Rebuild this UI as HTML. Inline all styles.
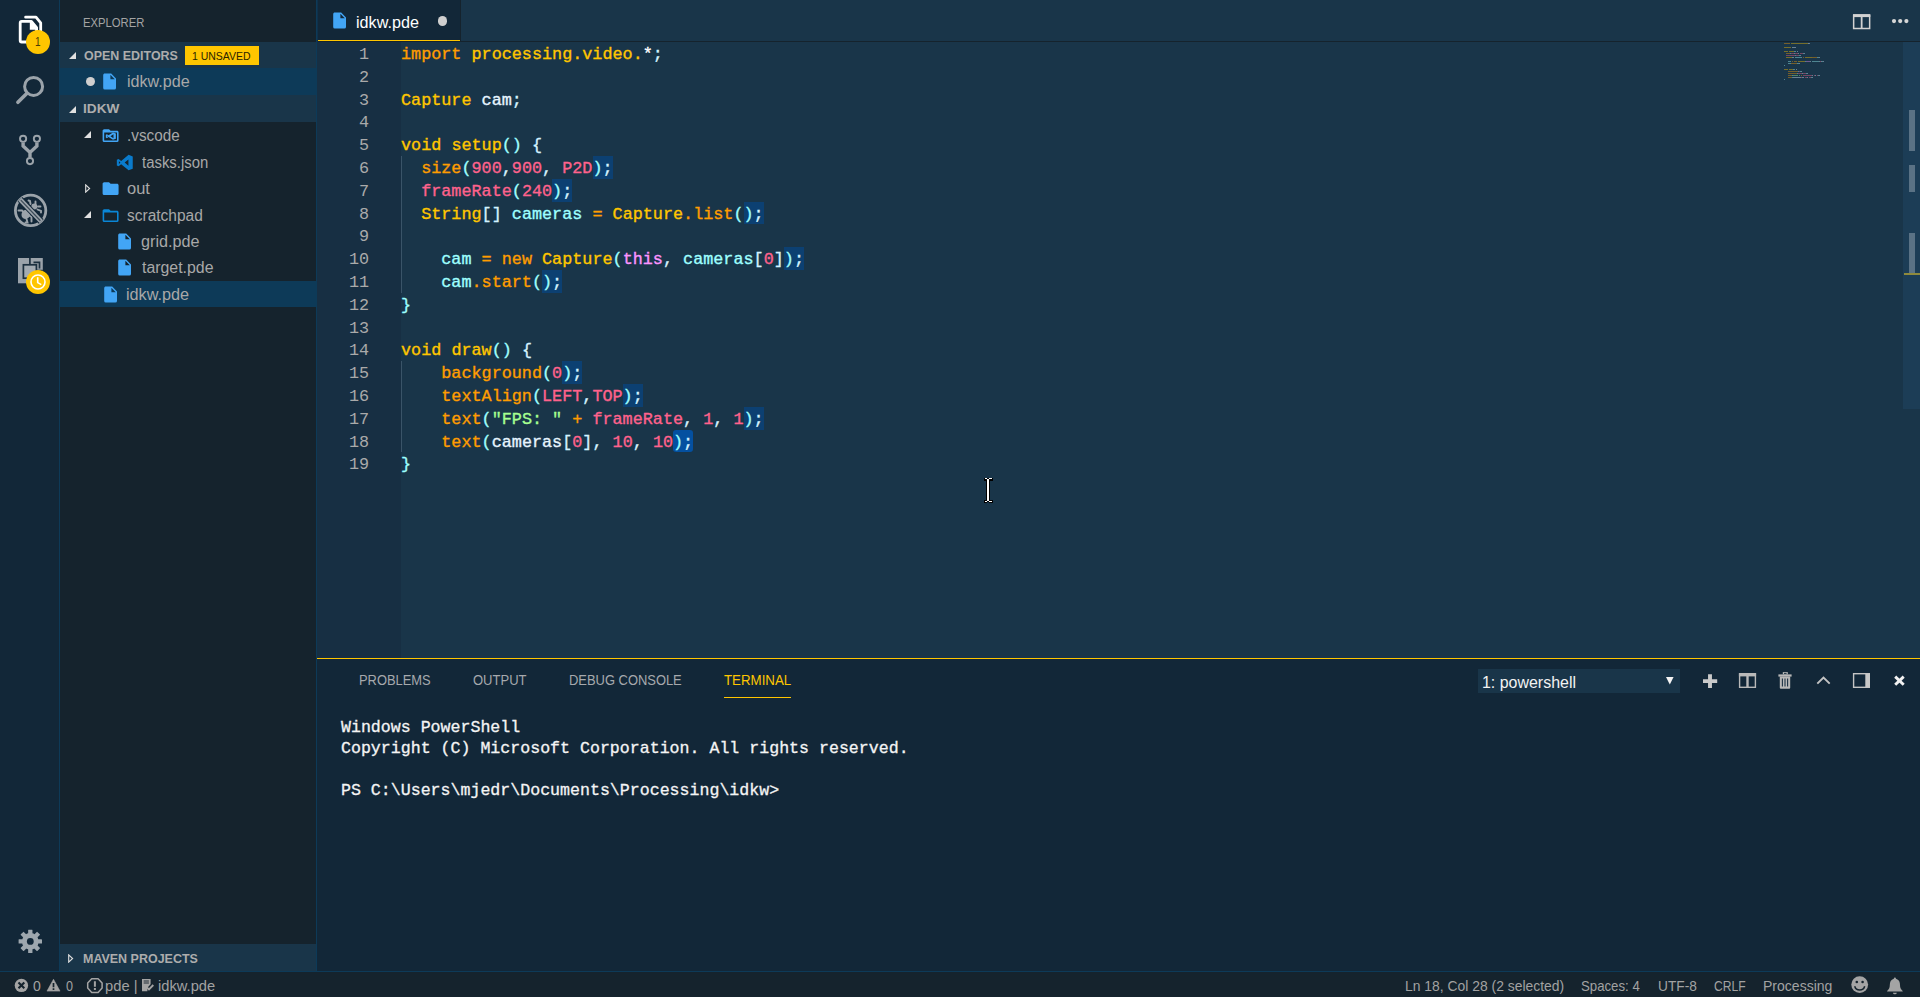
<!DOCTYPE html>
<html lang="en">
<head>
<meta charset="utf-8">
<title>idkw.pde - idkw - Visual Studio Code</title>
<style>
*{box-sizing:border-box;margin:0;padding:0}
html,body{width:1920px;height:997px;overflow:hidden;background:#193549}
body{position:relative;font-family:"Liberation Sans",sans-serif;font-size:15.6px;color:#aaa}
svg{position:absolute;overflow:visible}
/* fitted text: absolutely placed, scaled horizontally about its left edge */
.fx{position:absolute;left:0;top:0;display:block;white-space:nowrap;transform-origin:0 50%}
/* ---------- activity bar ---------- */
#act{position:absolute;left:0;top:0;width:60px;height:971px;background:#122738;border-right:1px solid #0d3a58}
.badge{position:absolute;width:24px;height:24px;border-radius:12px;background:#ffc600}
.badge .fx{color:#4a3c05;font-size:13.2px;line-height:24px}
/* ---------- sidebar ---------- */
#side{position:absolute;left:60px;top:0;width:256px;height:971px;background:#15232d;overflow:hidden}
#sideborder{position:absolute;left:316px;top:0;width:1px;height:971px;background:#0d3a58}
#fill1{position:absolute;left:317px;top:0;width:1px;height:42px;background:#0f314b}
#fill2{position:absolute;left:317px;top:42px;width:1px;height:616px;background:#172f43}
#fill3{position:absolute;left:317px;top:658px;width:1px;height:313px;background:#122738;border-top:1px solid #ffc600}
#t-ex{font-size:12.4px;line-height:42px;color:#a4a4a4;top:2px}
.hdr{position:absolute;left:0;width:256px;height:26px;background:#193549;font-weight:bold;font-size:13px;color:#adadad;line-height:26px}
.row{position:absolute;left:0;width:256px;height:26.4px;color:#a8a8a8;font-size:15.6px;line-height:26.4px}
.row.sel{background:#0d3a58}
.ic{width:19.2px;height:19.2px}
.dot{position:absolute;width:9.4px;height:9.4px;border-radius:50%;background:#cfcfcf}
.ubadge{position:absolute;left:125px;top:4px;width:74px;height:19px;background:#ffc600;color:#2a2300;font-weight:normal;font-size:10.8px;line-height:20px}
/* ---------- editor ---------- */
#tabs{position:absolute;left:318px;top:0;width:1602px;height:42px;background:#193549;border-bottom:1px solid #15232d}
#tab{position:absolute;left:0;top:0;width:142px;height:41px;background:#122738;border-bottom:1.400px solid #ffc600}
#tabsep{position:absolute;left:142px;top:0;width:1px;height:41px;background:#15232d}
#t-tab{color:#fff;font-size:15.6px;line-height:43px;top:1px}
#editor{position:absolute;left:318px;top:42px;width:1602px;height:616px;background:#193549;overflow:hidden;--cw:10.08px}
#gutter{position:absolute;left:0;top:0;width:83px;height:616px;background:#172f43}
.ln{position:absolute;left:0;width:51.2px;margin-top:2px;text-align:right;color:#aaa;font-family:"Liberation Mono",monospace;font-size:16.8px;line-height:22.8px;height:22.8px}
.cl{position:absolute;left:83px;margin-top:2px;white-space:pre;color:#fff;-webkit-text-stroke:.35px currentColor;font-family:"Liberation Mono",monospace;font-size:16.8px;line-height:22.8px;height:22.8px}
.guide{position:absolute;left:83px;width:1px;background:#3a5468}
.selhl,.selreal{position:absolute;height:22.8px;width:calc(2 * var(--cw))}
.selhl{background:#0c4072}
.selreal{background:#0450a0;border-radius:3px}
.k{color:#ff9d00}.y{color:#ffc600}.c{color:#9effff}.p{color:#d4f2ff}.v{color:#e6f4ff}.n{color:#ff628c}.m{color:#fb94ff}.s{color:#a5ff90}
#sbar{position:absolute;left:1585px;top:0;width:17px;height:367px;background:#1c3d56}
.om{position:absolute;left:6px;width:6px;background:#5a7285}
/* ---------- panel ---------- */
#panel{position:absolute;left:318px;top:658px;width:1602px;height:313px;background:#122738;border-top:1px solid #ffc600}
.pt{font-size:14.4px;line-height:20px;color:#a6a9ad}
#p4{color:#ffc600}
#pul{position:absolute;left:406px;top:38px;width:67.300px;height:1.400px;background:#ffc600}
#dd{position:absolute;left:1160px;top:10px;width:202px;height:24px;background:#193549}
#t-dd{color:#f2f2f2;font-size:15.6px;line-height:24px}
.tl{position:absolute;left:23px;white-space:pre;color:#f4f4f4;-webkit-text-stroke:.3px currentColor;font-family:"Liberation Mono",monospace;font-size:16.6px;line-height:21px;height:21px;letter-spacing:0}
/* ---------- status ---------- */
#status{position:absolute;left:0;top:971px;width:1920px;height:26px;background:#15232d;border-top:1px solid #0d3a58;color:#a2a2a2;font-size:14.4px;line-height:27px}
#status .fx{top:1px}
#t-ex{left:23.31px;transform:scaleX(0.9080)}
#t-oe{left:23.84px;transform:scaleX(0.9579)}
#t-ub{left:7.13px;transform:scaleX(0.9678)}
#t-idkw{left:23.28px;transform:scaleX(1.0496)}
#r0{left:66.57px;transform:scaleX(1.0338)}
#r1{left:66.62px;transform:scaleX(0.9795)}
#r2{left:81.90px;transform:scaleX(0.9569)}
#r3{left:67.23px;transform:scaleX(1.0551)}
#r4{left:67.20px;transform:scaleX(0.9929)}
#r5{left:81.08px;transform:scaleX(1.0370)}
#r6{left:81.90px;transform:scaleX(1.0179)}
#r7{left:66.26px;transform:scaleX(1.0399)}
#t-mv{left:23.10px;transform:scaleX(0.9598)}
#t-tab{left:37.58px;transform:scaleX(1.0366)}
#p1{left:41.01px;transform:scaleX(0.8961)}
#p2{left:154.64px;transform:scaleX(0.9043)}
#p3{left:251.10px;transform:scaleX(0.8980)}
#p4{left:406.21px;transform:scaleX(0.9234)}
#t-dd{left:3.78px;transform:scaleX(1.0227)}
#s1{left:33.44px;transform:scaleX(0.9752)}
#s2{left:65.90px;transform:scaleX(0.8750)}
#s3{left:105.17px;transform:scaleX(1.0239)}
#s4{left:157.94px;transform:scaleX(1.0210)}
#s5{left:1405.42px;transform:scaleX(0.9658)}
#s6{left:1581.30px;transform:scaleX(0.9176)}
#s7{left:1658.16px;transform:scaleX(0.9541)}
#s8{left:1714.23px;transform:scaleX(0.8433)}
#s9{left:1763.22px;transform:scaleX(0.9744)}
#t-b1{left:9.07px;transform:scaleX(0.7560)}
</style>
</head>
<body>
<svg width="0" height="0"><defs>
<symbol id="i-file" viewBox="0 0 24 24"><path fill="#42a5f5" d="M13 9V3.5L18.5 9M6 2c-1.11 0-2 .89-2 2v16a2 2 0 0 0 2 2h12a2 2 0 0 0 2-2V8l-6-6H6z"/></symbol>
<symbol id="i-folder" viewBox="0 0 24 24"><path fill="#42a5f5" d="M10 4H4c-1.11 0-2 .89-2 2v12a2 2 0 0 0 2 2h16a2 2 0 0 0 2-2V8c0-1.11-.9-2-2-2h-8l-2-2z"/></symbol>
<symbol id="i-fopen" viewBox="0 0 24 24"><path fill="#0a86d6" d="M20 18H4V8h16m0-2h-8l-2-2H4c-1.11 0-2 .89-2 2v12a2 2 0 0 0 2 2h16a2 2 0 0 0 2-2V8c0-1.11-.9-2-2-2z"/></symbol>
<symbol id="i-fvs" viewBox="0 0 24 24"><path fill="#42a5f5" d="M20 18H4V8h16m0-2h-8l-2-2H4c-1.110 0-2 .890-2 2v12a2 2 0 0 0 2 2h16a2 2 0 0 0 2-2V8c0-1.110-.900-2-2-2z"/><path fill="#42a5f5" fill-rule="evenodd" d="M15 8.200L18.600 9.500V16L15 17.300 9.400 13.700 7.400 15.200 6 14.500V10.900L7.400 10.200 9.400 11.700zM15.600 10.200V15.300L11.800 12.750zM7.500 11.900L8.600 12.700 7.500 13.500z"/></symbol>
<symbol id="i-vs" viewBox="0 0 24 24"><path fill="#0a7bcc" fill-rule="evenodd" d="M17 2.300L22.200 4.400V19.600L17 21.700 7.700 14.100 4.500 16.600 2.300 15.500V8.500L4.500 7.400 7.700 9.900zM16.800 8.200V15.800L12.100 12zM4.900 10.300L6.800 12 4.900 13.700z"/></symbol>
<symbol id="i-tw" viewBox="0 0 7 7"><path d="M7 0v7H0z" fill="#e0e0e0"/></symbol>
<symbol id="i-twc" viewBox="0 0 6 9"><path d="M.700.900L4.600 4.500.700 8.100z" fill="none" stroke="#dcdcdc" stroke-width="1.150"/></symbol>
</defs></svg>
<div id="act">
<svg width="60" height="971" viewBox="0 0 60 971">
  <!-- explorer (active, white) -->
  <g fill="none" stroke="#fff" stroke-width="2.800" stroke-linejoin="round" stroke-linecap="round">
    <path d="M25.600 17.200H36L40.700 22.800V38"/>
    <path d="M21.700 21.400H31.400L36.600 27.600V40.500a1.500 1.500 0 0 1-1.500 1.500H21.700a1.500 1.500 0 0 1-1.500-1.500V22.900a1.500 1.500 0 0 1 1.500-1.500z"/>
  </g>
  <path fill="#fff" d="M29.800 21.400h1.600l5.200 6.200v2.200h-6.800z"/>
  <!-- search -->
  <g fill="none" stroke="#9ba3aa" stroke-linecap="round">
    <circle cx="33.600" cy="86.400" r="9" stroke-width="3"/>
    <path d="M27 93.200L17.900 102.300" stroke-width="3.600"/>
  </g>
  <!-- source control -->
  <g fill="none" stroke="#9ba3aa">
    <circle cx="23.100" cy="138.800" r="3.100" stroke-width="1.900"/>
    <circle cx="36.900" cy="138.800" r="3.100" stroke-width="1.900"/>
    <circle cx="30" cy="161.100" r="3.100" stroke-width="1.900"/>
    <path d="M23.100 142.500V146L30 152.500 36.900 146V142.500M30 152.500V157.500" stroke-width="3.400" stroke-linejoin="miter"/>
  </g>
  <!-- debug (disabled bug) -->
  <g fill="none" stroke="#9ba3aa">
    <circle cx="30.600" cy="210.400" r="15.200" stroke-width="2.800"/>
  </g>
  <g fill="#9ba3aa" stroke="#9ba3aa" stroke-width="1.900" stroke-linecap="round">
    <ellipse cx="26" cy="214.300" rx="4.300" ry="4.800" transform="rotate(40 26 214.300)" stroke="none"/>
    <circle cx="34.300" cy="206.600" r="3" stroke="none"/>
    <path d="M18.500 210.500h3.500l1.500 1.500M26.500 219l1 3.500h-2M30 216l1.500 1v4.500M28.500 200.500l1.500.5.500 3M35.500 201.500v2.500M38 206.500h2.500M37.500 209.500l3.500 1.500v1.500" fill="none"/>
  </g>
  <path d="M20 199.300L41.200 221.500" stroke="#122738" stroke-width="6.500"/>
  <path d="M20 199.300L41.200 221.500" stroke="#9ba3aa" stroke-width="4.600"/>
  <path d="M20.800 200.100L40.400 220.700" stroke="#3d4c59" stroke-width="1.300"/>
  <!-- extensions -->
  <rect x="18" y="258" width="24.800" height="25.300" fill="#9ba3aa"/>
  <g fill="none" stroke="#1c303f" stroke-width="1.700">
    <path d="M29.900 258v6.500M33.500 262.300H39.500V268.500M42.800 270.500h-6"/>
    <rect x="23.400" y="264.800" width="13" height="13.400" fill="#a3abb2"/>
  </g>
  <!-- gear -->
  <g fill="#9ea7ae" transform="translate(30.300 941.400)">
    <circle r="8.300"/>
    <g id="tth"><rect x="-2.150" y="-11.700" width="4.300" height="23.400" rx=".4"/><rect x="-2.150" y="-11.700" width="4.300" height="23.400" rx=".4" transform="rotate(90)"/></g>
    <use href="#tth" transform="rotate(45)"/>
    <circle r="3.400" fill="#122738"/>
  </g>
</svg>
<div class="badge" style="left:26px;top:30px"><span class="fx" id="t-b1">1</span></div>
<div class="badge" style="left:26px;top:270px"><svg width="24" height="24" viewBox="0 0 24 24" style="left:0;top:0"><circle cx="12" cy="12" r="7" fill="none" stroke="#fff" stroke-width="1.600"/><path d="M11.700 7.300V12.600L15.300 14.600" fill="none" stroke="#fff" stroke-width="1.600"/></svg></div>
</div>
<div id="side">
  <span class="fx" id="t-ex">EXPLORER</span>
  <!-- open editors -->
  <div class="hdr" style="top:42px"><svg style="left:8.600px;top:9.600px" width="7" height="7"><use href="#i-tw"/></svg><span class="fx" id="t-oe" style="top:.600px">OPEN EDITORS</span>
    <span class="ubadge"><span class="fx" id="t-ub">1 UNSAVED</span></span></div>
  <div class="row sel" style="top:68px;height:27px"><span class="dot" style="left:26px;top:9px"></span>
    <svg class="ic" style="left:39.800px;top:4px"><use href="#i-file"/></svg><span class="fx" id="r0" style="top:1.300px">idkw.pde</span></div>
  <!-- folder -->
  <div class="hdr" style="top:95px;height:27px"><svg style="left:8.600px;top:10.500px" width="7" height="7"><use href="#i-tw"/></svg><span class="fx" id="t-idkw" style="top:1.200px">IDKW</span></div>
  <div class="row" style="top:121.800px"><svg style="left:24px;top:9.600px" width="7" height="7"><use href="#i-tw"/></svg>
    <svg class="ic" style="left:41.200px;top:4.600px"><use href="#i-fvs"/></svg><span class="fx" id="r1" style="top:.900px">.vscode</span></div>
  <div class="row" style="top:148.200px"><svg class="ic" style="left:55.100px;top:4.800px"><use href="#i-vs"/></svg><span class="fx" id="r2" style="top:1.700px">tasks.json</span></div>
  <div class="row" style="top:174.600px"><svg style="left:24.500px;top:9.300px" width="6" height="9"><use href="#i-twc"/></svg>
    <svg class="ic" style="left:41.200px;top:4.800px"><use href="#i-folder"/></svg><span class="fx" id="r3" style="top:1.700px">out</span></div>
  <div class="row" style="top:201px"><svg style="left:24px;top:9.900px" width="7" height="7"><use href="#i-tw"/></svg>
    <svg class="ic" style="left:41.200px;top:4.600px"><use href="#i-fopen"/></svg><span class="fx" id="r4" style="top:1.700px">scratchpad</span></div>
  <div class="row" style="top:227.400px"><svg class="ic" style="left:54.900px;top:4.400px"><use href="#i-file"/></svg><span class="fx" id="r5" style="top:1.700px">grid.pde</span></div>
  <div class="row" style="top:253.800px"><svg class="ic" style="left:54.900px;top:4.200px"><use href="#i-file"/></svg><span class="fx" id="r6" style="top:.900px">target.pde</span></div>
  <div class="row sel" style="top:280.600px"><svg class="ic" style="left:40.900px;top:4.500px"><use href="#i-file"/></svg><span class="fx" id="r7" style="top:1.200px">idkw.pde</span></div>
  <!-- maven -->
  <div class="hdr" style="top:944px;height:27px"><svg style="left:8.200px;top:9.600px" width="6" height="9"><use href="#i-twc"/></svg><span class="fx" id="t-mv" style="top:2.400px">MAVEN PROJECTS</span></div>
</div>
<div id="sideborder"></div><div id="fill1"></div><div id="fill2"></div><div id="fill3"></div>
<div id="tabs"><div id="tab"><svg class="ic" style="left:11.800px;top:10.900px"><use href="#i-file"/></svg><span class="fx" id="t-tab">idkw.pde</span><span class="dot" style="left:119.600px;top:16.200px;width:9.600px;height:9.600px"></span></div><div id="tabsep"></div>
<svg width="70" height="42" viewBox="0 0 70 42" style="left:1530px;top:0"><g fill="none" stroke="#d2d2d2"><rect x="5.650" y="15.400" width="16" height="13.100" stroke-width="1.500"/><path d="M5 15.600h17.300" stroke-width="3"/><path d="M13.650 15v13.500" stroke-width="1.800"/></g><g fill="#d6d6d6"><circle cx="46" cy="21.100" r="2.100"/><circle cx="52.200" cy="21.100" r="2.100"/><circle cx="58.400" cy="21.100" r="2.100"/></g></svg>
</div>
<div id="editor"><div id="gutter"></div>
<div class="guide" style="top:114px;height:136.800px"></div>
<div class="guide" style="top:319.200px;height:91.200px"></div>
<div class="selhl" style="top:114px;left:calc(83px + 19 * var(--cw))"></div>
<div class="selhl" style="top:136.8px;left:calc(83px + 15 * var(--cw))"></div>
<div class="selhl" style="top:159.6px;left:calc(83px + 34 * var(--cw))"></div>
<div class="selhl" style="top:205.2px;left:calc(83px + 38 * var(--cw))"></div>
<div class="selhl" style="top:228px;left:calc(83px + 14 * var(--cw))"></div>
<div class="selhl" style="top:319.2px;left:calc(83px + 16 * var(--cw))"></div>
<div class="selhl" style="top:342px;left:calc(83px + 22 * var(--cw))"></div>
<div class="selhl" style="top:364.8px;left:calc(83px + 34 * var(--cw))"></div>
<div class="selreal" style="top:387.6px;left:calc(83px + 27 * var(--cw))"></div>
<div class="ln" style="top:0px">1</div>
<div class="ln" style="top:22.8px">2</div>
<div class="ln" style="top:45.6px">3</div>
<div class="ln" style="top:68.4px">4</div>
<div class="ln" style="top:91.2px">5</div>
<div class="ln" style="top:114px">6</div>
<div class="ln" style="top:136.8px">7</div>
<div class="ln" style="top:159.6px">8</div>
<div class="ln" style="top:182.4px">9</div>
<div class="ln" style="top:205.2px">10</div>
<div class="ln" style="top:228px">11</div>
<div class="ln" style="top:250.8px">12</div>
<div class="ln" style="top:273.6px">13</div>
<div class="ln" style="top:296.4px">14</div>
<div class="ln" style="top:319.2px">15</div>
<div class="ln" style="top:342px">16</div>
<div class="ln" style="top:364.8px">17</div>
<div class="ln" style="top:387.6px">18</div>
<div class="ln" style="top:410.4px">19</div>
<div class="cl" style="top:0px"><span class="k">import</span> <span class="y">processing.video.</span>*<span class="p">;</span></div>
<div class="cl" style="top:45.6px"><span class="y">Capture</span> <span class="v">cam</span><span class="p">;</span></div>
<div class="cl" style="top:91.2px"><span class="y">void</span> <span class="y">setup</span><span class="c">()</span> <span class="p">{</span></div>
<div class="cl" style="top:114px">  <span class="k">size</span><span class="c">(</span><span class="n">900</span><span class="p">,</span><span class="n">900</span><span class="p">,</span> <span class="n">P2D</span><span class="c">)</span><span class="p">;</span></div>
<div class="cl" style="top:136.8px">  <span class="n">frameRate</span><span class="c">(</span><span class="n">240</span><span class="c">)</span><span class="p">;</span></div>
<div class="cl" style="top:159.6px">  <span class="y">String</span><span class="p">[]</span> <span class="c">cameras</span> <span class="k">=</span> <span class="y">Capture</span><span class="k">.list</span><span class="c">()</span><span class="p">;</span></div>
<div class="cl" style="top:205.2px">    <span class="c">cam</span> <span class="k">=</span> <span class="k">new</span> <span class="y">Capture</span><span class="c">(</span><span class="m">this</span><span class="p">,</span> <span class="c">cameras</span><span class="p">[</span><span class="n">0</span><span class="p">]</span><span class="c">)</span><span class="p">;</span></div>
<div class="cl" style="top:228px">    <span class="c">cam</span><span class="k">.start</span><span class="c">()</span><span class="p">;</span></div>
<div class="cl" style="top:250.8px"><span class="c">}</span></div>
<div class="cl" style="top:296.4px"><span class="y">void</span> <span class="y">draw</span><span class="c">()</span> <span class="p">{</span></div>
<div class="cl" style="top:319.2px">    <span class="k">background</span><span class="c">(</span><span class="n">0</span><span class="c">)</span><span class="p">;</span></div>
<div class="cl" style="top:342px">    <span class="k">textAlign</span><span class="c">(</span><span class="n">LEFT</span><span class="p">,</span><span class="n">TOP</span><span class="c">)</span><span class="p">;</span></div>
<div class="cl" style="top:364.8px">    <span class="k">text</span><span class="c">(</span><span class="s">"FPS: "</span> <span class="k">+</span> <span class="n">frameRate</span><span class="p">,</span> <span class="n">1</span><span class="p">,</span> <span class="n">1</span><span class="c">)</span><span class="p">;</span></div>
<div class="cl" style="top:387.6px">    <span class="k">text</span><span class="c">(</span><span class="v">cameras</span><span class="p">[</span><span class="n">0</span><span class="p">]</span><span class="p">,</span> <span class="n">10</span><span class="p">,</span> <span class="n">10</span><span class="c">)</span><span class="p">;</span></div>
<div class="cl" style="top:410.4px"><span class="c">}</span></div>
<svg id="mm" width="60" height="42" viewBox="0 0 60 42" style="left:1465.500px;top:0" shape-rendering="crispEdges"><rect x="0" y="0.5" width="6" height="1.200" fill="#ff9d00" opacity=".4"/><rect x="7" y="0.5" width="17" height="1.200" fill="#ffc600" opacity=".4"/><rect x="24" y="0.5" width="1" height="1.200" fill="#ffffff" opacity=".4"/><rect x="25" y="0.5" width="1" height="1.200" fill="#e1efff" opacity=".4"/><rect x="0" y="4.5" width="7" height="1.200" fill="#ffc600" opacity=".4"/><rect x="8" y="4.5" width="3" height="1.200" fill="#e6f4ff" opacity=".4"/><rect x="11" y="4.5" width="1" height="1.200" fill="#e1efff" opacity=".4"/><rect x="0" y="8.5" width="4" height="1.200" fill="#ffc600" opacity=".4"/><rect x="5" y="8.5" width="5" height="1.200" fill="#ffc600" opacity=".4"/><rect x="10" y="8.5" width="2" height="1.200" fill="#9effff" opacity=".4"/><rect x="13" y="8.5" width="1" height="1.200" fill="#e1efff" opacity=".4"/><rect x="2" y="10.5" width="4" height="1.200" fill="#ff9d00" opacity=".4"/><rect x="6" y="10.5" width="1" height="1.200" fill="#9effff" opacity=".4"/><rect x="7" y="10.5" width="3" height="1.200" fill="#ff628c" opacity=".4"/><rect x="10" y="10.5" width="1" height="1.200" fill="#e1efff" opacity=".4"/><rect x="11" y="10.5" width="3" height="1.200" fill="#ff628c" opacity=".4"/><rect x="14" y="10.5" width="1" height="1.200" fill="#e1efff" opacity=".4"/><rect x="16" y="10.5" width="3" height="1.200" fill="#ff628c" opacity=".4"/><rect x="19" y="10.5" width="1" height="1.200" fill="#9effff" opacity=".4"/><rect x="20" y="10.5" width="1" height="1.200" fill="#e1efff" opacity=".4"/><rect x="2" y="12.5" width="9" height="1.200" fill="#ff628c" opacity=".4"/><rect x="11" y="12.5" width="1" height="1.200" fill="#9effff" opacity=".4"/><rect x="12" y="12.5" width="3" height="1.200" fill="#ff628c" opacity=".4"/><rect x="15" y="12.5" width="1" height="1.200" fill="#9effff" opacity=".4"/><rect x="16" y="12.5" width="1" height="1.200" fill="#e1efff" opacity=".4"/><rect x="2" y="14.5" width="6" height="1.200" fill="#ffc600" opacity=".4"/><rect x="8" y="14.5" width="2" height="1.200" fill="#e1efff" opacity=".4"/><rect x="11" y="14.5" width="7" height="1.200" fill="#9effff" opacity=".4"/><rect x="19" y="14.5" width="1" height="1.200" fill="#ff9d00" opacity=".4"/><rect x="21" y="14.5" width="7" height="1.200" fill="#ffc600" opacity=".4"/><rect x="28" y="14.5" width="5" height="1.200" fill="#ff9d00" opacity=".4"/><rect x="33" y="14.5" width="2" height="1.200" fill="#9effff" opacity=".4"/><rect x="35" y="14.5" width="1" height="1.200" fill="#e1efff" opacity=".4"/><rect x="4" y="18.5" width="3" height="1.200" fill="#9effff" opacity=".4"/><rect x="8" y="18.5" width="1" height="1.200" fill="#ff9d00" opacity=".4"/><rect x="10" y="18.5" width="3" height="1.200" fill="#ff9d00" opacity=".4"/><rect x="14" y="18.5" width="7" height="1.200" fill="#ffc600" opacity=".4"/><rect x="21" y="18.5" width="1" height="1.200" fill="#9effff" opacity=".4"/><rect x="22" y="18.5" width="4" height="1.200" fill="#fb94ff" opacity=".4"/><rect x="26" y="18.5" width="1" height="1.200" fill="#e1efff" opacity=".4"/><rect x="28" y="18.5" width="7" height="1.200" fill="#9effff" opacity=".4"/><rect x="35" y="18.5" width="1" height="1.200" fill="#e1efff" opacity=".4"/><rect x="36" y="18.5" width="1" height="1.200" fill="#ff628c" opacity=".4"/><rect x="37" y="18.5" width="1" height="1.200" fill="#e1efff" opacity=".4"/><rect x="38" y="18.5" width="1" height="1.200" fill="#9effff" opacity=".4"/><rect x="39" y="18.5" width="1" height="1.200" fill="#e1efff" opacity=".4"/><rect x="4" y="20.5" width="3" height="1.200" fill="#9effff" opacity=".4"/><rect x="7" y="20.5" width="6" height="1.200" fill="#ff9d00" opacity=".4"/><rect x="13" y="20.5" width="2" height="1.200" fill="#9effff" opacity=".4"/><rect x="15" y="20.5" width="1" height="1.200" fill="#e1efff" opacity=".4"/><rect x="0" y="22.5" width="1" height="1.200" fill="#9effff" opacity=".4"/><rect x="0" y="26.5" width="4" height="1.200" fill="#ffc600" opacity=".4"/><rect x="5" y="26.5" width="4" height="1.200" fill="#ffc600" opacity=".4"/><rect x="9" y="26.5" width="2" height="1.200" fill="#9effff" opacity=".4"/><rect x="12" y="26.5" width="1" height="1.200" fill="#e1efff" opacity=".4"/><rect x="4" y="28.5" width="10" height="1.200" fill="#ff9d00" opacity=".4"/><rect x="14" y="28.5" width="1" height="1.200" fill="#9effff" opacity=".4"/><rect x="15" y="28.5" width="1" height="1.200" fill="#ff628c" opacity=".4"/><rect x="16" y="28.5" width="1" height="1.200" fill="#9effff" opacity=".4"/><rect x="17" y="28.5" width="1" height="1.200" fill="#e1efff" opacity=".4"/><rect x="4" y="30.5" width="9" height="1.200" fill="#ff9d00" opacity=".4"/><rect x="13" y="30.5" width="1" height="1.200" fill="#9effff" opacity=".4"/><rect x="14" y="30.5" width="4" height="1.200" fill="#ff628c" opacity=".4"/><rect x="18" y="30.5" width="1" height="1.200" fill="#e1efff" opacity=".4"/><rect x="19" y="30.5" width="3" height="1.200" fill="#ff628c" opacity=".4"/><rect x="22" y="30.5" width="1" height="1.200" fill="#9effff" opacity=".4"/><rect x="23" y="30.5" width="1" height="1.200" fill="#e1efff" opacity=".4"/><rect x="4" y="32.5" width="4" height="1.200" fill="#ff9d00" opacity=".4"/><rect x="8" y="32.5" width="1" height="1.200" fill="#9effff" opacity=".4"/><rect x="9" y="32.5" width="5" height="1.200" fill="#a5ff90" opacity=".4"/><rect x="15" y="32.5" width="1" height="1.200" fill="#a5ff90" opacity=".4"/><rect x="17" y="32.5" width="1" height="1.200" fill="#ff9d00" opacity=".4"/><rect x="19" y="32.5" width="9" height="1.200" fill="#ff628c" opacity=".4"/><rect x="28" y="32.5" width="1" height="1.200" fill="#e1efff" opacity=".4"/><rect x="30" y="32.5" width="1" height="1.200" fill="#ff628c" opacity=".4"/><rect x="31" y="32.5" width="1" height="1.200" fill="#e1efff" opacity=".4"/><rect x="33" y="32.5" width="1" height="1.200" fill="#ff628c" opacity=".4"/><rect x="34" y="32.5" width="1" height="1.200" fill="#9effff" opacity=".4"/><rect x="35" y="32.5" width="1" height="1.200" fill="#e1efff" opacity=".4"/><rect x="4" y="34.5" width="4" height="1.200" fill="#ff9d00" opacity=".4"/><rect x="8" y="34.5" width="1" height="1.200" fill="#9effff" opacity=".4"/><rect x="9" y="34.5" width="7" height="1.200" fill="#e6f4ff" opacity=".4"/><rect x="16" y="34.5" width="1" height="1.200" fill="#e1efff" opacity=".4"/><rect x="17" y="34.5" width="1" height="1.200" fill="#ff628c" opacity=".4"/><rect x="18" y="34.5" width="1" height="1.200" fill="#e1efff" opacity=".4"/><rect x="19" y="34.5" width="1" height="1.200" fill="#e1efff" opacity=".4"/><rect x="21" y="34.5" width="2" height="1.200" fill="#ff628c" opacity=".4"/><rect x="23" y="34.5" width="1" height="1.200" fill="#e1efff" opacity=".4"/><rect x="25" y="34.5" width="2" height="1.200" fill="#ff628c" opacity=".4"/><rect x="27" y="34.5" width="1" height="1.200" fill="#9effff" opacity=".4"/><rect x="28" y="34.5" width="1" height="1.200" fill="#e1efff" opacity=".4"/><rect x="0" y="36.5" width="1" height="1.200" fill="#9effff" opacity=".4"/></svg>
<div id="sbar"><div class="om" style="top:67.700px;height:40.900px"></div><div class="om" style="top:122.800px;height:27.100px"></div><div class="om" style="top:190.800px;height:40.700px"></div><div style="position:absolute;left:1px;top:231px;width:16px;height:2.400px;background:#8f8a3c"></div></div>
<svg width="10" height="26" viewBox="0 0 10 26" style="left:665px;top:435px" shape-rendering="crispEdges"><path d="M.5.500h3.800l.7.700.700-.700h3.800v3h-2.800v19h2.800v3H5.700l-.7-.700-.700.700H.500v-3h2.800v-19H.500z" fill="#000"/><path d="M1.500 1.500h2.500M6 1.500h2.500M1.500 24.500h2.500M6 24.500h2.500" stroke="#fff" stroke-width="1.200"/><path d="M5 1.800v22.400" stroke="#fff" stroke-width="2"/></svg>
</div>
<div id="panel">
  <span class="fx pt" id="p1" style="top:11px">PROBLEMS</span>
  <span class="fx pt" id="p2" style="top:11px">OUTPUT</span>
  <span class="fx pt" id="p3" style="top:11px">DEBUG CONSOLE</span>
  <span class="fx pt" id="p4" style="top:11px">TERMINAL</span>
  <div id="pul"></div>
  <div id="dd"><span class="fx" id="t-dd" style="top:1.600px">1: powershell</span><svg width="8" height="8" viewBox="0 0 8 8" style="left:187.500px;top:8.400px"><path d="M0 0h7.600L3.800 7.600z" fill="#f4f4f4"/></svg></div>
  <svg width="220" height="40" viewBox="1380 0 220 40" style="left:1380px;top:0">
    <!-- new terminal -->
    <path d="M1392 15.200v13.800M1385 22.100h14.200" stroke="#cacaca" stroke-width="3.900" fill="none"/>
    <!-- split -->
    <g fill="none" stroke="#b9b9b9"><rect x="1421.600" y="15" width="15.800" height="13.300" stroke-width="1.400"/><path d="M1420.900 15.700h17.200" stroke-width="3.400"/><path d="M1429.500 15v13.500" stroke-width="2.400"/></g>
    <!-- trash -->
    <g fill="#b9b9b9"><path d="M1464.800 13.100h5v2.300h-5z"/><rect x="1460.400" y="15.400" width="13.200" height="2.200"/><path d="M1461.800 17.600h10.400v11.200a1 1 0 0 1-1 1h-8.400a1 1 0 0 1-1-1z"/></g>
    <g stroke="#1d3345" stroke-width="1.100"><path d="M1464.400 19.500v8M1467 19.500v8M1469.600 19.500v8"/><path d="M1466 14.400h2.600" stroke-width="1"/></g>
    <!-- chevron up -->
    <path d="M1499.300 24.600l6.200-6.100 6.200 6.100" fill="none" stroke="#c4c4c4" stroke-width="1.900"/>
    <!-- move panel right -->
    <rect x="1535.600" y="14.700" width="15.700" height="13.600" fill="none" stroke="#c4c4c4" stroke-width="1.400"/><rect x="1547.300" y="14.700" width="4.700" height="13.600" fill="#c8c8c8"/>
    <!-- close -->
    <path d="M1577.200 17.600l8.500 8.200M1585.700 17.600l-8.500 8.200" stroke="#f2f2f2" stroke-width="2.900" fill="none"/>
  </svg>
  <div class="tl" style="top:57.800px">Windows PowerShell</div>
  <div class="tl" style="top:78.800px">Copyright (C) Microsoft Corporation. All rights reserved.</div>
  <div class="tl" style="top:120.800px">PS C:\Users\mjedr\Documents\Processing\idkw&gt;</div>
</div>
<div id="status">
  <svg width="240" height="25" viewBox="0 972 240 25" style="left:0;top:0">
    <!-- errors -->
    <circle cx="21.400" cy="985.400" r="6.700" fill="#a4a4a4"/><path d="M18.500 982.500l5.800 5.800M24.300 982.500l-5.800 5.800" stroke="#15232d" stroke-width="2.100"/>
    <!-- warnings -->
    <path d="M53.500 979.300L60 991.100H47z" fill="#a4a4a4" stroke="#a4a4a4" stroke-width=".6" stroke-linejoin="round"/><path d="M53.500 983v4.300M53.500 988.300v1.700" stroke="#15232d" stroke-width="1.700"/>
    <!-- info octagon -->
    <path d="M91.700 978.800h6.400l4 4.300v5l-4 4.400h-6.400l-4-4.400v-5z" fill="none" stroke="#a4a4a4" stroke-width="1.500" stroke-linejoin="round"/><path d="M94.900 981.300v5.400M94.900 988v2.100" stroke="#a4a4a4" stroke-width="2"/>
    <!-- file check -->
    <path d="M142 979.100h8.600v5.200l-3.200 3.400v3.600H142z" fill="#a4a4a4"/><path d="M143.700 981h5.200M143.700 983h5.200" stroke="#15232d" stroke-width=".9"/><path d="M146.900 987.300l2.100 2.100 4.300-4.400" fill="none" stroke="#a4a4a4" stroke-width="1.900"/>
  </svg>
  <span class="fx" id="s1">0</span><span class="fx" id="s2">0</span><span class="fx" id="s3">pde |</span><span class="fx" id="s4">idkw.pde</span>
  <span class="fx" id="s5">Ln 18, Col 28 (2 selected)</span><span class="fx" id="s6">Spaces: 4</span><span class="fx" id="s7">UTF-8</span><span class="fx" id="s8">CRLF</span><span class="fx" id="s9">Processing</span>
  <svg width="70" height="25" viewBox="1845 972 70 25" style="left:1845px;top:0">
    <circle cx="1859.700" cy="984.600" r="8.400" fill="#a4a4a4"/><circle cx="1856.800" cy="982" r="1.300" fill="#15232d"/><circle cx="1862.600" cy="982" r="1.300" fill="#15232d"/><path d="M1854.700 986.200a5.200 5.200 0 0 0 10 0" fill="none" stroke="#15232d" stroke-width="1.500"/>
    <path d="M1894.900 977.600a1.100 1.100 0 0 1 1.100 1.100c3 .8 4 3.400 4 6.300 0 3 1 4.500 2.700 6v.6h-15.600v-.6c1.700-1.500 2.700-3 2.700-6 0-2.900 1-5.500 4-6.300a1.100 1.100 0 0 1 1.100-1.100z" fill="#a4a4a4"/><path d="M1893 992.700h3.800a1.900 1.500 0 0 1-3.800 0z" fill="#a4a4a4"/>
  </svg>
</div>
</body>
</html>
